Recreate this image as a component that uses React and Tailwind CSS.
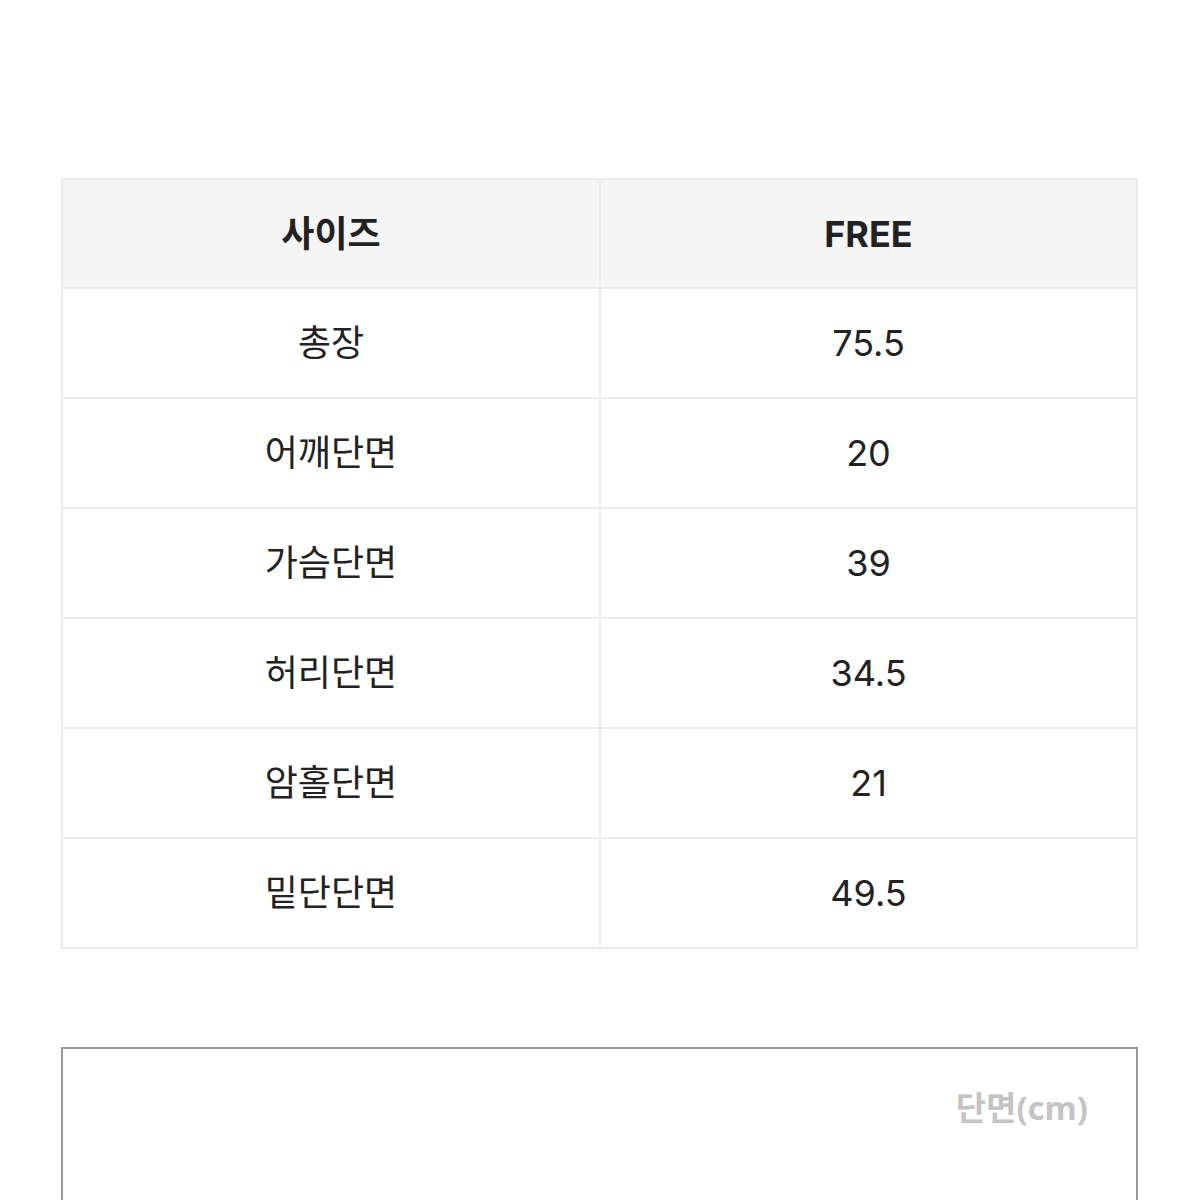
import React from 'react';

const rows = [
  ['총장', '75.5'],
  ['어깨단면', '20'],
  ['가슴단면', '39'],
  ['허리단면', '34.5'],
  ['암홀단면', '21'],
  ['밑단단면', '49.5'],
];

function App() {
  return (
    <div
      className="w-[1200px] h-[1200px] bg-white overflow-hidden"
      style={{ fontFamily: 'Inter, "Noto Sans CJK KR", sans-serif' }}
    >
      <div className="pt-[178px] px-[61px]">
        <table className="w-[1077px] border-collapse border-2 border-[#ebebeb] text-[#222]">
          <thead>
            <tr className="bg-[#f5f5f5] h-[109px]">
              <th className="w-[538px] border-2 border-[#ebebeb] text-[36px] font-bold">사이즈</th>
              <th className="border-2 border-[#ebebeb] text-[36px] font-bold">FREE</th>
            </tr>
          </thead>
          <tbody>
            {rows.map(([label, value]) => (
              <tr key={label} className="h-[110px]">
                <td className="border-2 border-[#ebebeb] text-center text-[36px]">{label}</td>
                <td className="border-2 border-[#ebebeb] text-center text-[36px]">{value}</td>
              </tr>
            ))}
          </tbody>
        </table>

        <div className="mt-[98px] w-[1077px] h-[200px] border-2 border-[#999] border-b-0 flex justify-end">
          <span className="mt-[34px] mr-[48px] text-[33px] font-bold text-[#c4c4c4]" style={{ fontFamily: '"Noto Sans", "Noto Sans CJK KR", sans-serif' }}>단면(cm)</span>
        </div>
      </div>
    </div>
  );
}

export default App;
